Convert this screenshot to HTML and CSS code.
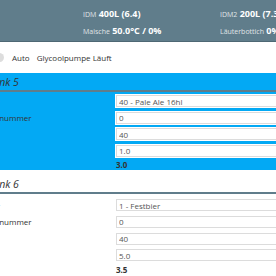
FILE: index.html
```html
<!DOCTYPE html>
<html lang="de">
<head>
    <meta charset="UTF-8">
    <meta name="viewport" content="width=device-width, initial-scale=1.0">
    <title>Brauanlage - Tanks</title>
    <link rel="stylesheet" href="styles.css">
</head>
<body>

<header class="topbar">
    <div class="stat"></div>
    <div class="stat"><small>IDM</small> 400L (6.4)</div>
    <div class="stat"><small>IDM2</small> 200L (7.3)</div>
    <div class="stat"><small>Rührwerk</small> 0%</div>
    <div class="stat"><small>Maische</small> 50.0°C / 0%</div>
    <div class="stat"><small>Läuterbottich</small> 0%</div>
</header>

<div class="page">
    <div class="switches">
        <label class="radio"><span class="dot"></span>Auto</label>
        <span class="status">Glycoolpumpe Läuft</span>
    </div>

    <!-- Tanks -->
    <section class="tank active">
        <h2>Tank 5</h2>
        <div class="row"><span>Bier</span><input type="text" value="40 - Pale Ale 16hl"></div>
        <div class="row"><span>Sudnummer</span><input type="text" value="0"></div>
        <div class="row"><span>L</span><input type="text" value="40"></div>
        <div class="row"><span>Soll</span><input type="text" value="1.0"></div>
        <div class="row result"><span>Ist</span><b>3.0</b></div>
    </section>

    <section class="tank">
        <h2>Tank 6</h2>
        <div class="row"><span>Bier</span><input type="text" value="1 - Festbier"></div>
        <div class="row"><span>Sudnummer</span><input type="text" value="0"></div>
        <div class="row"><span>L</span><input type="text" value="40"></div>
        <div class="row"><span>Soll</span><input type="text" value="5.0"></div>
        <div class="row result"><span>Ist</span><b>3.5</b></div>
    </section>
</div>

</body>
</html>
```

FILE: styles.css
```css
body {
    font-family: "Open Sans", Arial, sans-serif;
    margin: 0;
    padding: 0;
    background: white;
    color: #333;
    overflow: hidden;
}
.topbar {
    background-color: #607d8b;
    color: white;
    height: 33px;
    padding-top: 8px;
    border-bottom: 1px solid #4e6874;
    display: grid;
    grid-template-columns: repeat(3, 137px);
    align-content: start;
    row-gap: 6px;
    margin-left: -54px;
}
.stat {
    font-size: 9px;
    font-weight: bold;
    line-height: 11px;
    height: 11px;
    white-space: nowrap;
}
.stat small {
    font-size: 7px;
    font-weight: normal;
    opacity: 0.8;
}
.page {
    margin-left: -15px;
    width: 340px;
}
.switches {
    display: flex;
    align-items: center;
    gap: 7px;
    font-size: 8px;
    height: 31px;
    padding-left: 10px;
}
.radio {
    display: flex;
    align-items: center;
    gap: 8px;
}
.dot {
    width: 9px;
    height: 9px;
    border-radius: 50%;
    background: #ddd;
}
.tank.active {
    background-color: #03a9f4;
}
.tank h2 {
    font-size: 10.5px;
    line-height: 13px;
    font-weight: normal;
    font-style: italic;
    margin: 0 0 3px 0;
    padding: 3px 0 1px 3px;
    border-bottom: 2px solid #607d8b;
}
.tank + .tank h2 {
    padding-top: 6px;
    margin-bottom: 5px;
}
.row {
    display: grid;
    grid-template-columns: 131px 1fr;
    align-items: center;
    font-size: 8px;
    margin-bottom: 4.6px;
}
.row input {
    height: 12px;
    box-sizing: border-box;
    border: 1px solid #dcdcdc;
    outline: 1.5px solid white;
    font-family: inherit;
    font-size: 8px;
    color: #555;
    padding: 0 2px;
    margin: 0;
}
.row.result {
    margin-top: -2px;
    margin-bottom: 2px;
}
.row b {
    font-size: 8px;
    line-height: 11px;
}
```
